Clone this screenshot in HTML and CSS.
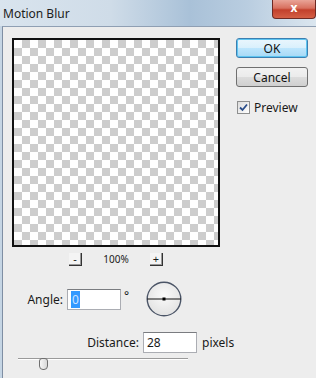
FILE: index.html
```html
<!DOCTYPE html>
<html lang="en">
<head>
    <meta charset="UTF-8">
    <title>Motion Blur</title>
    <link rel="stylesheet" href="styles.css">
</head>
<body>
    <div class="window">
        <div class="titlebar">
            <span class="title">Motion Blur</span>
            <div class="close">x</div>
        </div>
        <div class="client">
            <div class="top">
                <div class="preview-col">
                    <div class="preview"></div>
                    <div class="zoom-row">
                        <span class="zoom-btn">-</span>
                        <span class="zoom-text">100%</span>
                        <span class="zoom-btn">+</span>
                    </div>
                </div>
                <div class="buttons">
                    <button class="btn btn-ok">OK</button>
                    <button class="btn">Cancel</button>
                    <label class="check">
                        <span class="box">
                            <svg width="11" height="11" viewBox="0 0 11 11">
                                <path d="M2 5.5 L4.5 8 L9 2.5" fill="none" stroke="#2a4d8a" stroke-width="1.8"/>
                            </svg>
                        </span>
                        Preview
                    </label>
                </div>
            </div>

            <div class="angle-row">
                <span class="lbl lbl-angle">Angle:</span>
                <span class="field"><span class="sel">0</span></span>
                <span class="deg">&deg;</span>
                <svg class="dial" width="36" height="36" viewBox="0 0 36 36">
                    <defs>
                        <radialGradient id="dialFill" cx="50%" cy="40%" r="60%">
                            <stop offset="0" stop-color="#fafafa"/>
                            <stop offset="1" stop-color="#e2e2e2"/>
                        </radialGradient>
                    </defs>
                    <circle cx="18" cy="18" r="16.8" fill="url(#dialFill)" stroke="#4b5567" stroke-width="1.4"/>
                    <line x1="1.2" y1="18" x2="34.8" y2="18" stroke="#111" stroke-width="1"/>
                    <rect x="16.5" y="16.5" width="3" height="3" fill="#000"/>
                </svg>
            </div>

            <div class="distance-row">
                <span class="lbl lbl-distance">Distance:</span>
                <span class="field">28</span>
                <span class="unit">pixels</span>
            </div>

            <div class="slider">
                <div class="track"></div>
                <div class="thumb"></div>
            </div>
        </div>
    </div>
</body>
</html>
```

FILE: styles.css
```css
body {
    margin: 0;
    font-family: "Noto Sans", "DejaVu Sans", sans-serif;
    font-size: 11px;
    color: #1a1a1a;
}
.window {
    width: 316px;
    height: 378px;
    background: #c5d5e4;
    overflow: hidden;
}
.titlebar {
    height: 26px;
    display: flex;
    align-items: flex-start;
    justify-content: space-between;
    background: linear-gradient(to right, #d9e4ee 0%, #cfdce8 35%, #a9c1d8 60%, #b9cde0 78%, #dbe6ef 100%);
}
.title {
    margin: 5px 0 0 3px;
    font-size: 12px;
    color: #1c1c1c;
}
.close {
    width: 42px;
    height: 18px;
    border: 1px solid #6d2a24;
    border-top: none;
    border-radius: 0 0 4px 4px;
    background: linear-gradient(#e9a497 0%, #d8705f 45%, #c2402c 55%, #d45f45 100%);
    color: #fff;
    font-weight: bold;
    font-size: 12px;
    text-align: center;
    line-height: 16px;
}
.client {
    height: 351px;
    margin-left: 2px;
    border-left: 1px solid #7f8ea3;
    border-top: 1px solid #8f9fb3;
    background: #ededed;
}
.top {
    display: flex;
}
.preview-col {
    margin: 11px 0 0 9px;
    width: 208px;
}
.preview {
    width: 204px;
    height: 205px;
    border: 2px solid #111;
    background-color: #fff;
    background-image: conic-gradient(#cdcdcd 25%, #fff 0 50%, #cdcdcd 0 75%, #fff 0);
    background-size: 16px 16px;
}
.zoom-row {
    display: flex;
    align-items: center;
    height: 14px;
    margin-top: 5px;
    padding-left: 57px;
}
.zoom-btn {
    width: 12px;
    height: 12px;
    border-right: 1px solid #333;
    border-bottom: 1px solid #333;
    background: #f4f4f4;
    box-shadow: inset -1px -1px 0 #999;
    text-align: center;
    font-size: 11px;
    line-height: 11px;
}
.zoom-text {
    width: 68px;
    text-align: center;
    font-size: 10px;
}
.buttons {
    display: flex;
    flex-direction: column;
    margin: 11px 0 0 16px;
}
.btn {
    width: 72px;
    height: 20px;
    margin-bottom: 9px;
    padding: 0;
    border: 1px solid #707070;
    border-radius: 3px;
    background: linear-gradient(#f2f2f2 0%, #ebebeb 50%, #dddddd 50%, #cfcfcf 100%);
    font-family: inherit;
    font-size: 12px;
    color: #111;
}
.btn-ok {
    border-color: #3c7fb1;
    background: linear-gradient(#eaf6fd 0%, #d9f0fc 50%, #bee6fd 50%, #a7d9f5 100%);
    box-shadow: inset 0 0 0 1px #5ec5f1;
}
.check {
    display: flex;
    align-items: center;
    gap: 4px;
    margin: 3px 0 0 1px;
    font-size: 12px;
}
.box {
    width: 11px;
    height: 11px;
    border: 1px solid #8e8f8f;
    background: linear-gradient(135deg, #dcdcdc, #fff);
    display: flex;
}
.angle-row {
    display: flex;
    align-items: center;
    height: 36px;
    margin-top: 15px;
}
.lbl {
    font-size: 12px;
    text-align: right;
}
.lbl-angle {
    width: 60px;
}
.lbl-distance {
    width: 136px;
}
.field {
    width: 49px;
    height: 19px;
    margin-left: 4px;
    padding-left: 3px;
    border: 1px solid #abadb3;
    border-top-color: #7a7c80;
    background: #fff;
    font-size: 12px;
    line-height: 19px;
}
.sel {
    background: #3399ff;
    color: #cfe4ff;
    padding: 0 1px;
}
.deg {
    width: 6px;
    margin: -7px 0 0 3px;
    font-size: 12px;
}
.dial {
    margin-left: 16px;
}
.distance-row {
    display: flex;
    align-items: center;
    height: 21px;
    margin-top: 15px;
}
.unit {
    margin-left: 5px;
    font-size: 12px;
}
.slider {
    position: relative;
    margin: 4px 0 0 15px;
    width: 170px;
    height: 13px;
}
.track {
    margin-top: 5px;
    height: 1px;
    background: #9a9a9a;
    border-bottom: 1px solid #fff;
}
.thumb {
    position: absolute;
    left: 21px;
    top: 0;
    width: 7px;
    height: 10px;
    border: 1px solid #6f6f6f;
    border-radius: 3px 3px 4px 4px;
    background: linear-gradient(to right, #f6f6f6, #d8d8d8);
}
```
